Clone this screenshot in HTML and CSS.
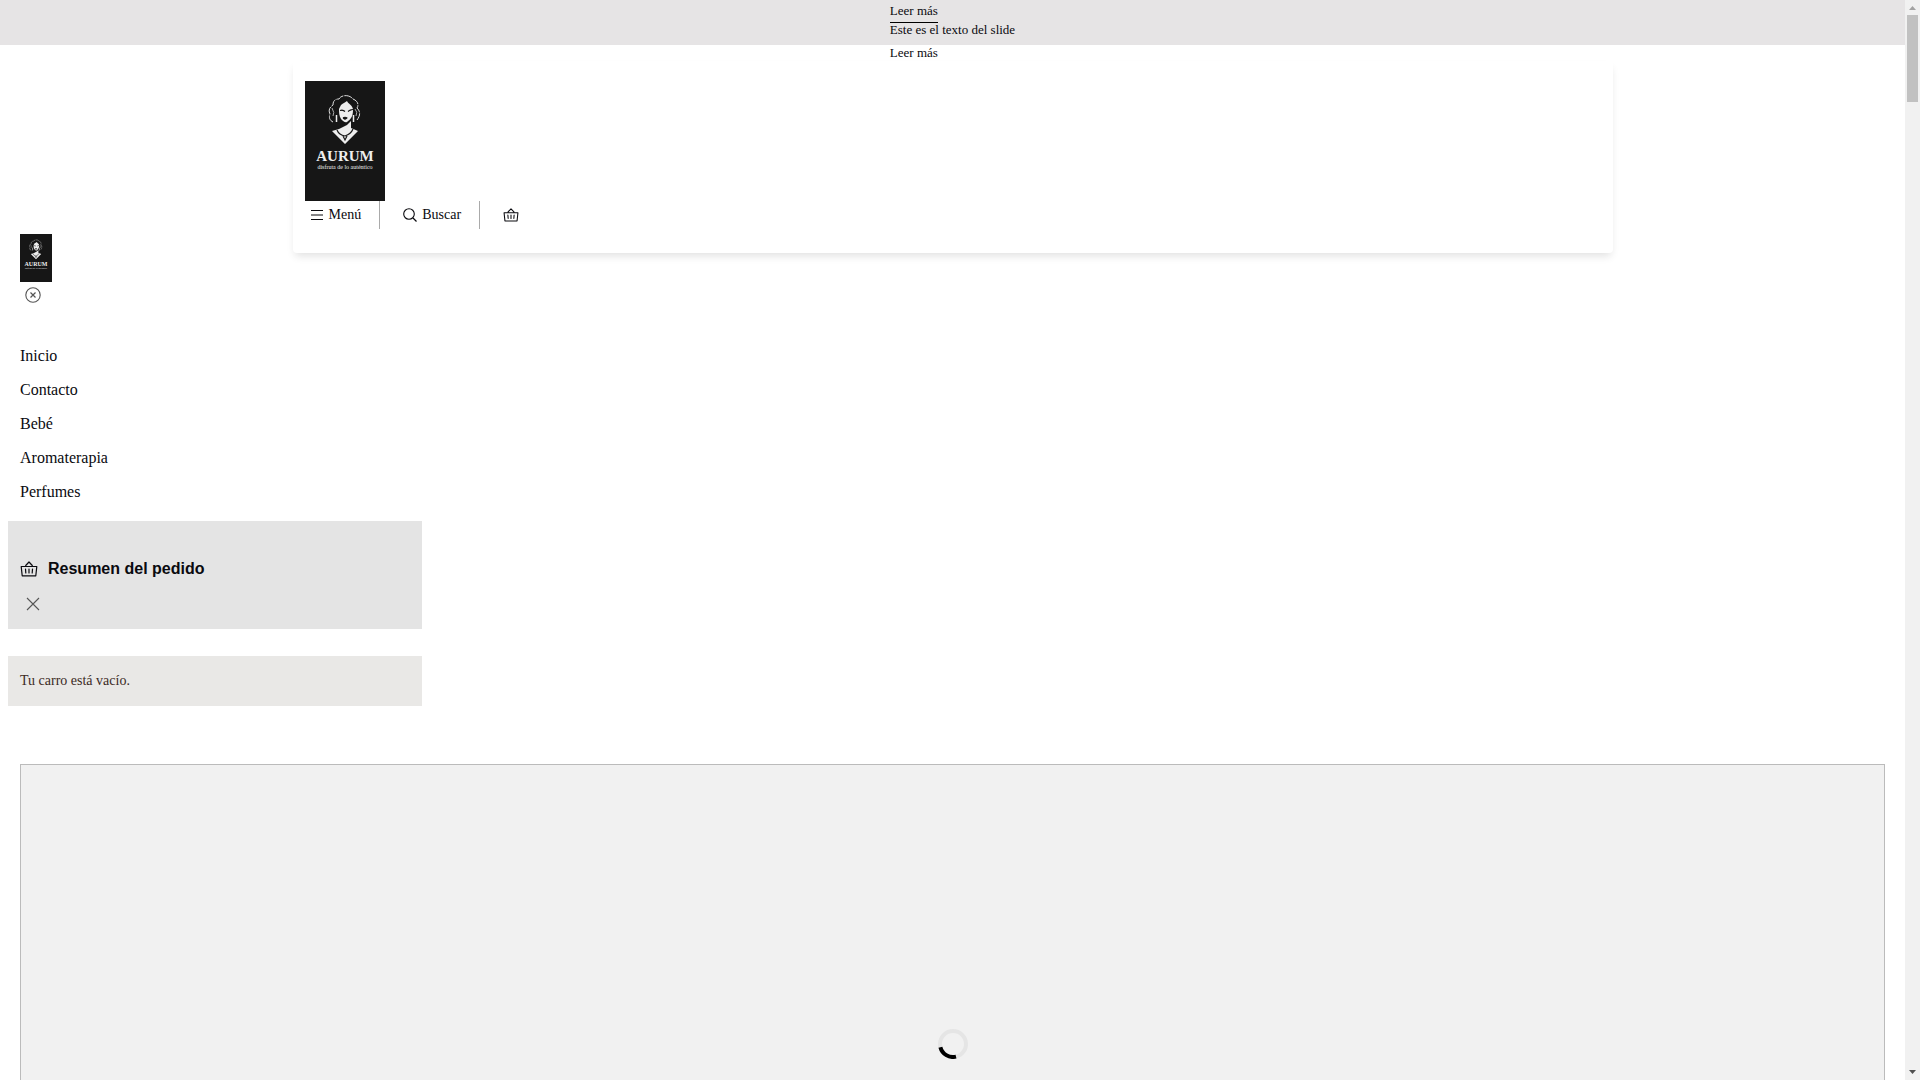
FILE: index.html
```
<!DOCTYPE html>
<html lang="es">
  <head>
    <meta charset="UTF-8" />
    <meta name="viewport" content="width=device-width, initial-scale=1.0" />
    <title>Aurum</title>
    <link rel="stylesheet" href="styles.css">
  </head>
  <body>
    <!-- Shared icons -->
    <svg class="sprite" aria-hidden="true">
      <symbol id="portrait" viewBox="0 0 80 120">
        <rect width="80" height="120" fill="#161616" />
        <path d="M28 41 C24 39 24 36 25 33 C23 29 25 26 28 24 C28 19 31 18 34 18 C36 14 44 13 48 18 C53 20 54 24 52 27 C56 31 55 35 52 39" fill="none" stroke="#ddd" stroke-width="1" stroke-dasharray="8 1" />
        <path d="M27 27 q3 5 1 8 M50 28 q3 3 1 7" fill="none" stroke="#aaa" stroke-width="1" />
        <path d="M36 24 C38 22 41 21 42 20 C43 23 48 24 48 29 C48 35 46 38 42 41 C40 42 38 40 36 38 C34 35 34 31 34 28 Z" fill="#eee" />
        <path d="M35 29.500 q3 -1 5 1 M43 30.500 q2 -2 5 -2 M38 37 q2 -1.500 4 0 q-2 2.500 -4 0" fill="#161616" stroke="#161616" stroke-width="1.1" />
        <path d="M31.500 34 v7 M48.500 34 v7" stroke="#eee" stroke-width="1.5" />
        <path d="M46 40 V47 L53 50 L40 63 L27 50 L34 48 L42 44 Z" fill="#eee" />
        <path d="M32 49 Q34 54 40 55 Q46 53 48 48 M38 55 l2 4 l2 -4" fill="none" stroke="#161616" stroke-width="1.2" />
      </symbol>
      <symbol id="basket" viewBox="0 0 18 18">
        <path d="M1.200 6.500 H16.800 L15.800 15.800 H2.200 Z M5.700 5.500 L9 2 L12.300 5.500 M5.500 9 l.3 4 M9 9 v4 M12.500 9 l-.3 4" fill="none" stroke="currentColor" stroke-width="1.200" stroke-linejoin="round" stroke-linecap="round" />
      </symbol>
    </svg>

    <div class="topbar">
      <div class="topbar-slides">
        <a href="#" class="slide-link underlined">Leer más</a>
        <p class="slide-text">Este es el texto del slide</p>
        <a href="#" class="slide-link">Leer más</a>
      </div>
    </div>

    <header class="header">
      <a href="#" class="logo" aria-label="Aurum">
        <svg viewBox="0 0 80 120">
          <use href="#portrait" width="80" height="120" />
          <text class="logo-name" x="40" y="80">AURUM</text>
          <text class="logo-tagline" x="40" y="88">disfruta de lo auténtico</text>
        </svg>
      </a>
      <nav class="header-nav">
        <button class="nav-button">
          <svg width="14" height="14" viewBox="0 0 14 14"><path d="M1 2.500h12M1 7h12M1 11.500h12" stroke="currentColor" stroke-width="1.1" /></svg>
          Menú
        </button>
        <button class="nav-button">
          <svg width="14" height="14" viewBox="0 0 14 14"><circle cx="6" cy="6" r="5.300" fill="none" stroke="currentColor" stroke-width="1.1" /><path d="M10 10l3.500 3.500" stroke="currentColor" stroke-width="1.3" /></svg>
          Buscar
        </button>
        <button class="nav-button" aria-label="Carro">
          <svg width="16" height="16"><use href="#basket" /></svg>
        </button>
      </nav>
    </header>

    <aside class="menu">
      <a href="#" class="logo logo-small" aria-label="Aurum">
        <svg viewBox="0 0 80 120">
          <use href="#portrait" width="80" height="120" />
          <text class="logo-name" x="40" y="80">AURUM</text>
          <text class="logo-tagline" x="40" y="88">disfruta de lo auténtico</text>
        </svg>
      </a>
      <button class="close-button" aria-label="Cerrar menú">
        <svg width="16" height="16" viewBox="0 0 16 16" fill="none" stroke="currentColor" stroke-width="1.1"><circle cx="8" cy="8" r="7.200" /><path d="M5.500 5.500l5 5M10.500 5.500l-5 5" stroke-width="1.2" /></svg>
      </button>
      <ul class="menu-list">
        <li><a href="#">Inicio</a></li>
        <li><a href="#">Contacto</a></li>
        <li><a href="#">Bebé</a></li>
        <li><a href="#">Aromaterapia</a></li>
        <li><a href="#">Perfumes</a></li>
      </ul>
    </aside>

    <section class="cart">
      <div class="cart-header">
        <h2 class="cart-title">
          <svg width="18" height="18"><use href="#basket" /></svg>
          Resumen del pedido
        </h2>
        <button class="close-button" aria-label="Cerrar carro">
          <svg width="16" height="16" viewBox="0 0 16 16"><path d="M2 2l12 12M14 2L2 14" stroke="currentColor" stroke-width="1.1" /></svg>
        </button>
      </div>
      <p class="cart-empty">Tu carro está vacío.</p>
    </section>

    <main class="content">
      <div class="slider">
        <svg class="spinner" viewBox="0 0 30 30" fill="none" stroke-width="4">
          <circle cx="15" cy="15" r="13" stroke="#e5e5e5" />
          <path d="M18 27.650A13 13 0 0 1 2.400 18.200" stroke="#000" />
        </svg>
      </div>
    </main>

    <div class="scrollbar" aria-hidden="true">
      <svg class="scroll-arrow" viewBox="0 0 15 15"><path d="M4 10h7L7.500 6z" fill="#a3a3a3" /></svg>
      <div class="scroll-thumb"></div>
      <svg class="scroll-arrow" viewBox="0 0 15 15"><path d="M4 5h7L7.500 9z" fill="#505050" /></svg>
    </div>
  </body>
</html>
```

FILE: styles.css
```
* {
  margin: 0;
  padding: 0;
  box-sizing: border-box;
}

body {
  padding-right: 15px;
  background-color: #fff;
  color: #0a0a0f;
  font-family: "Liberation Serif", "Times New Roman", serif;
  font-size: 16px;
}

a {
  color: inherit;
  text-decoration: none;
}

button {
  background: none;
  border: none;
  color: inherit;
  font: inherit;
  cursor: pointer;
}

svg {
  display: block;
}

.sprite {
  position: absolute;
  width: 0;
  height: 0;
}

/* Announcement bar, the last slide hangs below it */
.topbar {
  display: flex;
  justify-content: center;
  height: 45px;
  background-color: #e6e4e5;
  font-size: 13px;
  line-height: 13px;
}

.topbar-slides {
  display: flex;
  flex-direction: column;
  align-items: flex-start;
  padding-top: 4px;
}

.slide-link {
  flex-shrink: 0;
  height: 19px;
}

.underlined {
  border-bottom: 1px solid #000;
}

.slide-text {
  flex-shrink: 0;
  height: 23px;
}

/* Header */
.header {
  max-width: 1320px;
  margin: 16px auto 0;
  padding: 20px 12px 24px;
  border-radius: 4px;
  box-shadow: 0 5px 8px -2px rgba(0, 0, 0, 0.12);
}

.logo {
  display: block;
  width: 80px;
}

.logo svg {
  width: 100%;
  height: 120px;
}

.logo-name,
.logo-tagline {
  fill: #eee;
  text-anchor: middle;
}

.logo-name {
  font-size: 15px;
  font-weight: bold;
}

.logo-tagline {
  font-size: 6px;
}

.header-nav {
  display: flex;
}

.nav-button {
  display: flex;
  align-items: center;
  gap: 5px;
  height: 28px;
  padding: 0 18px 0 23px;
  font-size: 14px;
}

.nav-button:first-child {
  padding-left: 5px;
}

.nav-button + .nav-button {
  border-left: 1px solid #aaa;
}

/* Side menu */
.menu {
  margin-top: -19px;
  padding: 0 20px;
}

.logo-small {
  width: 32px;
}

.logo-small svg {
  height: 48px;
}

.close-button {
  display: block;
  padding: 5px;
  color: #555;
}

.menu-list {
  padding-top: 31px;
  list-style: none;
}

.menu-list a {
  display: block;
  line-height: 34px;
}

/* Cart */
.cart {
  width: 414px;
  max-width: 100%;
  margin: 12px 8px 0;
}

.cart-header {
  padding: 38px 12px 12px;
  background-color: #e4e4e4;
}

.cart-title {
  display: flex;
  align-items: center;
  gap: 10px;
  margin-bottom: 13px;
  font-family: "Liberation Sans", Arial, sans-serif;
  font-size: 16px;
  line-height: 19px;
}

.cart-empty {
  margin-top: 27px;
  padding: 16px 12px;
  background-color: #e9e8e6;
  color: #3b2a24;
  font-size: 14px;
  line-height: 18px;
}

/* Main slider */
.content {
  padding: 58px 20px 0;
}

.slider {
  display: flex;
  align-items: center;
  justify-content: center;
  height: 560px;
  background-color: #f1f1f1;
  border: 1px solid #bbb;
}

.spinner {
  width: 30px;
  height: 30px;
}

/* Scrollbar */
.scrollbar {
  position: fixed;
  top: 0;
  right: 0;
  bottom: 0;
  display: flex;
  flex-direction: column;
  width: 15px;
  background-color: #f1f1f1;
}

.scroll-arrow {
  width: 15px;
  height: 15px;
}

.scroll-thumb {
  height: 87px;
  margin: 0 2px auto;
  background-color: #c1c1c1;
}
```
